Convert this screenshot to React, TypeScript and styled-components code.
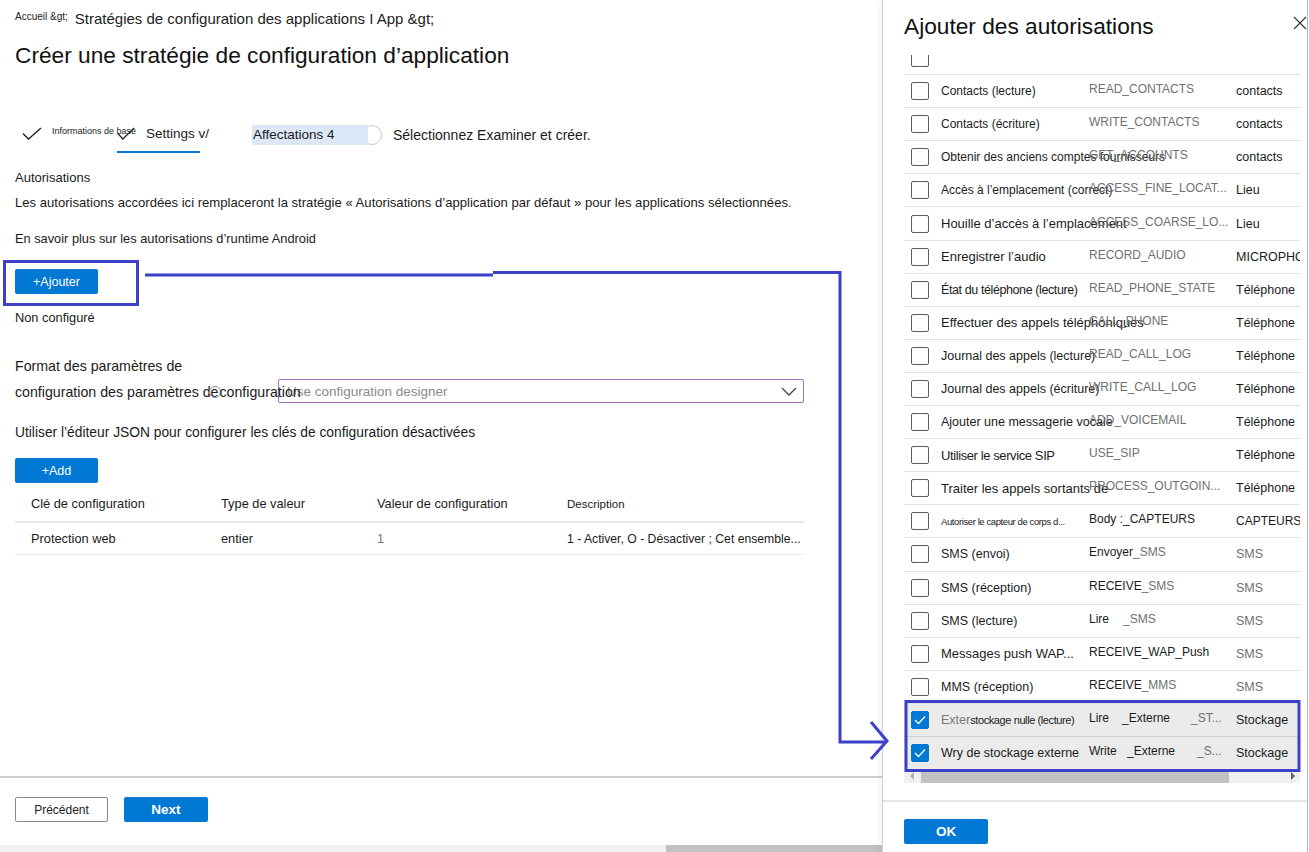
import React, { useLayoutEffect, useRef } from "react";
import styled, { createGlobalStyle } from "styled-components";

const GlobalStyle = createGlobalStyle`
  html, body { margin: 0; padding: 0; background: #fff; }
  body { font-family: "Liberation Sans", Arial, sans-serif; color: #1b1b1b; }
  * { box-sizing: border-box; }
`;

const ACCENT = "#0078d4";
const INK = "#3d41c7";

const Page = styled.div`
  position: relative;
  display: flex;
  width: 1309px;
  height: 852px;
  overflow: hidden;
`;

const Main = styled.main`
  width: 882px;
  flex: none;
  display: flex;
  flex-direction: column;
`;

const Content = styled.div`
  flex: 1;
  padding-left: 15px;
  display: flex;
  flex-direction: column;
  align-items: flex-start;
  font-size: 12.8px;
  white-space: nowrap;
`;

const Breadcrumb = styled.nav`
  margin-top: 10px;
  height: 16px;
  display: flex;
  align-items: center;
  gap: 7px;
`;

const Crumb = styled.span<{ $small?: boolean }>`
  font-size: ${(p) => (p.$small ? "10px" : "15px")};
  color: #222;
  margin-top: ${(p) => (p.$small ? "-3px" : "0")};
`;

const Title = styled.h1`
  margin: 14px 0 0;
  font-size: 22.7px;
  font-weight: 400;
  line-height: 30px;
  color: #111;
`;

const Steps = styled.div`
  margin-top: 50px;
  margin-left: 7px;
  height: 34px;
  display: flex;
  align-items: flex-start;
`;

const Step = styled.div<{ $w: number; $active?: boolean }>`
  width: ${(p) => p.$w}px;
  flex: none;
  height: 33px;
  padding-bottom: 5px;
  display: flex;
  align-items: center;
  border-bottom: 2px solid ${(p) => (p.$active ? ACCENT : "transparent")};
`;

const CheckIcon = styled.svg`
  flex: none;
  display: block;
`;

const StepText = styled.span<{ $small?: boolean; $gap: number }>`
  flex: none;
  margin-left: ${(p) => p.$gap}px;
  font-size: ${(p) => (p.$small ? "9px" : "13.5px")};
  margin-top: ${(p) => (p.$small ? "-5px" : "0")};
  color: #1b1b1b;
`;

const StepPill = styled.span`
  position: relative;
  z-index: 1;
  margin-left: 52px;
  margin-top: 5px;
  width: 116px;
  height: 20px;
  line-height: 20px;
  padding-left: 1px;
  background: #dce8f8;
  font-size: 13.5px;
`;

const StepRing = styled.span`
  margin-left: -6px;
  margin-top: 5px;
  width: 20px;
  height: 20px;
  border-radius: 50%;
  border: 1.5px solid #c9c9c9;
`;

const StepPlain = styled.span`
  margin-left: 11px;
  margin-top: 5px;
  line-height: 20px;
  font-size: 14px;
`;

const Text = styled.div<{ $top: number; $size?: number }>`
  margin-top: ${(p) => p.$top}px;
  font-size: ${(p) => (p.$size ? `${p.$size}px` : "inherit")};
  line-height: 18px;
`;

const BlueButton = styled.button<{ $top?: number; $w: number; $bold?: boolean }>`
  margin-top: ${(p) => p.$top ?? 0}px;
  width: ${(p) => p.$w}px;
  height: 25px;
  border: none;
  border-radius: 2px;
  background: ${ACCENT};
  color: #fff;
  font-family: inherit;
  font-size: ${(p) => (p.$bold ? "13.5px" : "12.5px")};
  font-weight: ${(p) => (p.$bold ? 700 : 400)};
  padding: 0;
`;

const GhostButton = styled.button`
  width: 93px;
  height: 25px;
  border: 1px solid #8a8a8a;
  border-radius: 2px;
  background: #fff;
  color: #1b1b1b;
  font-family: inherit;
  font-size: 12px;
  padding: 0;
`;

const FieldRow = styled.div`
  margin-top: 4px;
  width: 789px;
  height: 24px;
  display: flex;
  align-items: center;
`;

const FieldLabel = styled.div`
  position: relative;
  z-index: 1;
  width: 263px;
  flex: none;
  display: flex;
  align-items: center;
  padding-top: 2px;
  font-size: 14.2px;
`;

const InfoRing = styled.span`
  flex: none;
  width: 12px;
  height: 12px;
  border-radius: 50%;
  border: 1px solid #8f8f8f;
  margin: 0 -2px 0 -9px;
`;

const Select = styled.div`
  flex: 1;
  height: 24px;
  border: 1.5px solid #a86fc6;
  border-radius: 2px;
  display: flex;
  align-items: center;
  justify-content: space-between;
  padding: 0 6px 0 8px;
  color: #8a8a8a;
  font-size: 13.5px;
`;

const Table = styled.div`
  margin-top: 3px;
  width: 789px;
`;

const TRow = styled.div<{ $head?: boolean }>`
  display: grid;
  grid-template-columns: 190px 156px 190px 1fr;
  padding-left: 16px;
  height: ${(p) => (p.$head ? "37px" : "32px")};
  align-items: center;
  border-bottom: ${(p) => (p.$head ? "2px solid #e8e8e8" : "1px solid #ececec")};
`;

const Cell = styled.span<{ $muted?: boolean; $size?: number }>`
  color: ${(p) => (p.$muted ? "#777" : "#1b1b1b")};
  font-size: ${(p) => p.$size ?? 12.8}px;
  overflow: hidden;
`;

const Footer = styled.footer`
  height: 69px;
  border-top: 2px solid #cfcfcf;
  padding: 19px 15px 0;
  display: flex;
  gap: 16px;
  align-items: flex-start;
`;

const PageScroll = styled.div`
  height: 7px;
  display: flex;
  background: #f1f1f1;
`;

const PageThumb = styled.div`
  margin-left: 666px;
  flex: 1;
  background: #c2c2c2;
`;

const Panel = styled.aside`
  flex: 1;
  margin-right: 1px;
  border-left: 1px solid #d2d2d2;
  border-right: 1px solid #b9b9b9;
  padding: 0 7px 0 21px;
  display: flex;
  flex-direction: column;
  background: #fff;
  box-shadow: -3px 0 6px rgba(0, 0, 0, 0.05);
`;

const PanelHead = styled.header`
  height: 55px;
  padding-top: 11px;
  display: flex;
  align-items: flex-start;
`;

const PanelTitle = styled.h2`
  margin: 0;
  font-size: 22.7px;
  font-weight: 400;
  line-height: 30px;
  color: #111;
`;

const Close = styled.svg`
  margin: 5px -7px 0 auto;
`;

const ListViewport = styled.div`
  width: 396px;
  height: 713px;
  overflow: hidden;
`;

const PermRow = styled.div<{ $selected?: boolean }>`
  height: 33.1px;
  display: flex;
  align-items: center;
  padding-left: 7px;
  white-space: nowrap;
  border-bottom: 1px solid ${(p) => (p.$selected ? "#cfcfcf" : "#e2e2e2")};
  background: ${(p) => (p.$selected ? "#ebebeb" : "transparent")};
`;

const Box = styled.span<{ $checked?: boolean }>`
  width: 18px;
  height: 18px;
  flex: none;
  border-radius: 2px;
  border: 1.5px solid ${(p) => (p.$checked ? ACCENT : "#5c5c5c")};
  background: ${(p) => (p.$checked ? ACCENT : "#fff")};
  display: flex;
  align-items: center;
  justify-content: center;
  margin-right: 12px;
`;

const PermLabel = styled.span<{ $size: number; $tight?: boolean }>`
  width: 148px;
  flex: none;
  font-size: ${(p) => p.$size}px;
  letter-spacing: ${(p) => (p.$tight ? "-0.4px" : "0")};
  color: #1b1b1b;
`;

const Lead = styled.span`
  font-size: 12.5px;
  color: #777;
  letter-spacing: 0;
`;

const CodeCell = styled.span`
  width: 147px;
  flex: none;
  display: flex;
  padding-bottom: 4px;
  font-size: 12px;
`;

const CodeSeg = styled.span<{ $w?: number; $dark?: boolean }>`
  width: ${(p) => (p.$w ? `${p.$w}px` : "auto")};
  flex: none;
  color: ${(p) => (p.$dark ? "#1b1b1b" : "#707070")};
`;

const Category = styled.span<{ $muted?: boolean; $size?: number }>`
  flex: none;
  font-size: ${(p) => p.$size ?? 12.5}px;
  color: ${(p) => (p.$muted ? "#707070" : "#1b1b1b")};
`;

const HScroll = styled.div`
  width: 396px;
  height: 15px;
  background: #f0f0f0;
  display: flex;
  align-items: center;
`;

const HThumb = styled.div`
  margin-left: 7px;
  width: 308px;
  height: 14px;
  background: #c2c2c2;
`;

const Arrow = styled.span<{ $dir: "left" | "right" }>`
  width: 0;
  height: 0;
  border-top: 4px solid transparent;
  border-bottom: 4px solid transparent;
  ${(p) =>
    p.$dir === "left"
      ? "border-right: 4px solid #b0b0b0; margin-left: 6px;"
      : "border-left: 4px solid #606060; margin-left: auto; margin-right: 5px;"}
`;

const PanelFoot = styled.footer`
  margin: 17px -7px 0 -21px;
  padding: 17px 0 0 21px;
  border-top: 2px solid #e6e6e6;
  flex: 1;
`;

const Overlay = styled.svg`
  position: absolute;
  left: 0;
  top: 0;
  pointer-events: none;
  z-index: 5;
`;

type Seg = { t: string; w?: number; dark?: boolean };
type Perm = {
  label: string;
  size: number;
  tight?: boolean;
  lead?: string;
  code: Seg[];
  cat: string;
  catMuted?: boolean;
  catSize?: number;
  checked?: boolean;
};

const perms: Perm[] = [
  { label: "Contacts (lecture)", size: 12, code: [{ t: "READ_CONTACTS" }], cat: "contacts" },
  { label: "Contacts (écriture)", size: 12, code: [{ t: "WRITE_CONTACTS" }], cat: "contacts" },
  { label: "Obtenir des anciens comptes fournisseurs", size: 12, code: [{ t: "GET_ACCOUNTS" }], cat: "contacts" },
  { label: "Accès à l’emplacement (correct)", size: 12, code: [{ t: "ACCESS_FINE_LOCAT..." }], cat: "Lieu" },
  { label: "Houille d’accès à l’emplacement", size: 13, code: [{ t: "ACCESS_COARSE_LO..." }], cat: "Lieu" },
  { label: "Enregistrer l’audio", size: 13, code: [{ t: "RECORD_AUDIO" }], cat: "MICROPHONE" },
  { label: "État du téléphone (lecture)", size: 12.5, tight: true, code: [{ t: "READ_PHONE_STATE" }], cat: "Téléphone" },
  { label: "Effectuer des appels téléphoniques", size: 13, code: [{ t: "CALL_PHONE" }], cat: "Téléphone" },
  { label: "Journal des appels (lecture)", size: 12.5, code: [{ t: "READ_CALL_LOG" }], cat: "Téléphone" },
  { label: "Journal des appels (écriture)", size: 12.5, code: [{ t: "WRITE_CALL_LOG" }], cat: "Téléphone" },
  { label: "Ajouter une messagerie vocale", size: 12.5, code: [{ t: "ADD_VOICEMAIL" }], cat: "Téléphone" },
  { label: "Utiliser le service SIP", size: 13, tight: true, code: [{ t: "USE_SIP" }], cat: "Téléphone" },
  { label: "Traiter les appels sortants de", size: 13, code: [{ t: "PROCESS_OUTGOIN..." }], cat: "Téléphone" },
  {
    label: "Autoriser le capteur de corps d...",
    size: 9.5,
    tight: true,
    code: [{ t: "Body :_CAPTEURS", dark: true }],
    cat: "CAPTEURS",
    catSize: 12,
  },
  { label: "SMS (envoi)", size: 12.5, code: [{ t: "Envoyer", dark: true }, { t: "_SMS" }], cat: "SMS", catMuted: true },
  { label: "SMS (réception)", size: 12.5, code: [{ t: "RECEIVE", dark: true }, { t: "_SMS" }], cat: "SMS", catMuted: true },
  { label: "SMS (lecture)", size: 12.5, code: [{ t: "Lire", w: 34, dark: true }, { t: "_SMS" }], cat: "SMS", catMuted: true },
  { label: "Messages push WAP...", size: 13, code: [{ t: "RECEIVE", dark: true }, { t: "_WAP_Push", dark: true }], cat: "SMS", catMuted: true },
  { label: "MMS (réception)", size: 12.5, code: [{ t: "RECEIVE", dark: true }, { t: "_MMS" }], cat: "SMS", catMuted: true },
  {
    lead: "Exter",
    label: "stockage nulle (lecture)",
    size: 11,
    tight: true,
    code: [{ t: "Lire", w: 33, dark: true }, { t: "_Externe", w: 69, dark: true }, { t: "_ST..." }],
    cat: "Stockage",
    checked: true,
  },
  {
    label: "Wry de stockage externe",
    size: 12.5,
    code: [{ t: "Write", w: 38, dark: true }, { t: "_Externe", w: 70, dark: true }, { t: "_S..." }],
    cat: "Stockage",
    checked: true,
  },
];

function Check({ w = 20, h = 13 }: { w?: number; h?: number }) {
  return (
    <CheckIcon width={w} height={h} viewBox="0 0 20 13" fill="none" preserveAspectRatio="none">
      <path d="M1 6.5 L6.5 12 L19 1" stroke="#222" strokeWidth="1.4" />
    </CheckIcon>
  );
}

function BoxTick() {
  return (
    <svg width="12" height="10" viewBox="0 0 12 10" fill="none">
      <path d="M1 5 L4.5 8.5 L11 1.5" stroke="#fff" strokeWidth="1.3" />
    </svg>
  );
}

function PermissionList() {
  const ref = useRef<HTMLDivElement>(null);
  useLayoutEffect(() => {
    if (ref.current) ref.current.scrollTop = 13;
  }, []);
  return (
    <ListViewport ref={ref}>
      <PermRow>
        <Box />
      </PermRow>
      {perms.map((p) => (
        <PermRow key={p.label} $selected={p.checked}>
          <Box $checked={p.checked}>{p.checked && <BoxTick />}</Box>
          <PermLabel $size={p.size} $tight={p.tight}>
            {p.lead && <Lead>{p.lead}</Lead>}
            {p.label}
          </PermLabel>
          <CodeCell>
            {p.code.map((s) => (
              <CodeSeg key={s.t} $w={s.w} $dark={s.dark}>
                {s.t}
              </CodeSeg>
            ))}
          </CodeCell>
          <Category $muted={p.catMuted} $size={p.catSize}>
            {p.cat}
          </Category>
        </PermRow>
      ))}
    </ListViewport>
  );
}

export default function App() {
  return (
    <Page>
      <GlobalStyle />
      <Main>
        <Content>
          <Breadcrumb>
            <Crumb $small>Accueil &amp;gt;</Crumb>
            <Crumb>Stratégies de configuration des applications I App &amp;gt;</Crumb>
          </Breadcrumb>
          <Title>Créer une stratégie de configuration d’application</Title>

          <Steps>
            <Step $w={95}>
              <Check />
              <StepText $small $gap={10}>
                Informations de base
              </StepText>
            </Step>
            <Step $w={83} $active>
              <Check w={18} h={13} />
              <StepText $gap={11}>Settings v/</StepText>
            </Step>
            <StepPill>Affectations 4</StepPill>
            <StepRing />
            <StepPlain>Sélectionnez Examiner et créer.</StepPlain>
          </Steps>

          <Text $top={15} $size={13}>
            Autorisations
          </Text>
          <Text $top={7} $size={13.1}>
            Les autorisations accordées ici remplaceront la stratégie « Autorisations d’application par défaut » pour
            les applications sélectionnées.
          </Text>
          <Text $top={18}>En savoir plus sur les autorisations d’runtime Android</Text>
          <BlueButton $top={21} $w={83}>
            +Ajouter
          </BlueButton>
          <Text $top={15}>Non configuré</Text>

          <Text $top={30} $size={14.2}>
            Format des paramètres de
          </Text>
          <FieldRow>
            <FieldLabel>
              <span>configuration des paramètres de</span>
              <InfoRing />
              <span>configuration</span>
            </FieldLabel>
            <Select>
              <span>Use configuration designer</span>
              <svg width="16" height="9" viewBox="0 0 16 9" fill="none">
                <path d="M1 1 L8 8 L15 1" stroke="#444" strokeWidth="1.3" />
              </svg>
            </Select>
          </FieldRow>

          <Text $top={21} $size={13.8}>
            Utiliser l’éditeur JSON pour configurer les clés de configuration désactivées
          </Text>
          <BlueButton $top={16} $w={83}>
            +Add
          </BlueButton>

          <Table>
            <TRow $head>
              <Cell>Clé de configuration</Cell>
              <Cell>Type de valeur</Cell>
              <Cell>Valeur de configuration</Cell>
              <Cell $size={11.5}>Description</Cell>
            </TRow>
            <TRow>
              <Cell>Protection web</Cell>
              <Cell>entier</Cell>
              <Cell $muted>1</Cell>
              <Cell $size={12.2}>1 - Activer, O - Désactiver ; Cet ensemble...</Cell>
            </TRow>
          </Table>
        </Content>

        <Footer>
          <GhostButton>Précédent</GhostButton>
          <BlueButton $w={84} $bold>
            Next
          </BlueButton>
        </Footer>
        <PageScroll>
          <PageThumb />
        </PageScroll>
      </Main>

      <Panel>
        <PanelHead>
          <PanelTitle>Ajouter des autorisations</PanelTitle>
          <Close width="14" height="14" viewBox="0 0 14 14" fill="none">
            <path d="M1 1 L13 13 M13 1 L1 13" stroke="#333" strokeWidth="1.1" />
          </Close>
        </PanelHead>
        <PermissionList />
        <HScroll>
          <Arrow $dir="left" />
          <HThumb />
          <Arrow $dir="right" />
        </HScroll>
        <PanelFoot>
          <BlueButton $w={84} $bold>
            OK
          </BlueButton>
        </PanelFoot>
      </Panel>

      <Overlay width="1309" height="852" viewBox="0 0 1309 852" fill="none">
        <g stroke={INK} strokeWidth="3">
          <rect x="4.5" y="261.5" width="133" height="43" />
          <path d="M145 275 H493 M493 272.5 H841 M840 271 V742 H885" />
          <path d="M871 722 L887 741 L871 759" />
          <rect x="906" y="701.5" width="393" height="69" />
        </g>
      </Overlay>
    </Page>
  );
}
